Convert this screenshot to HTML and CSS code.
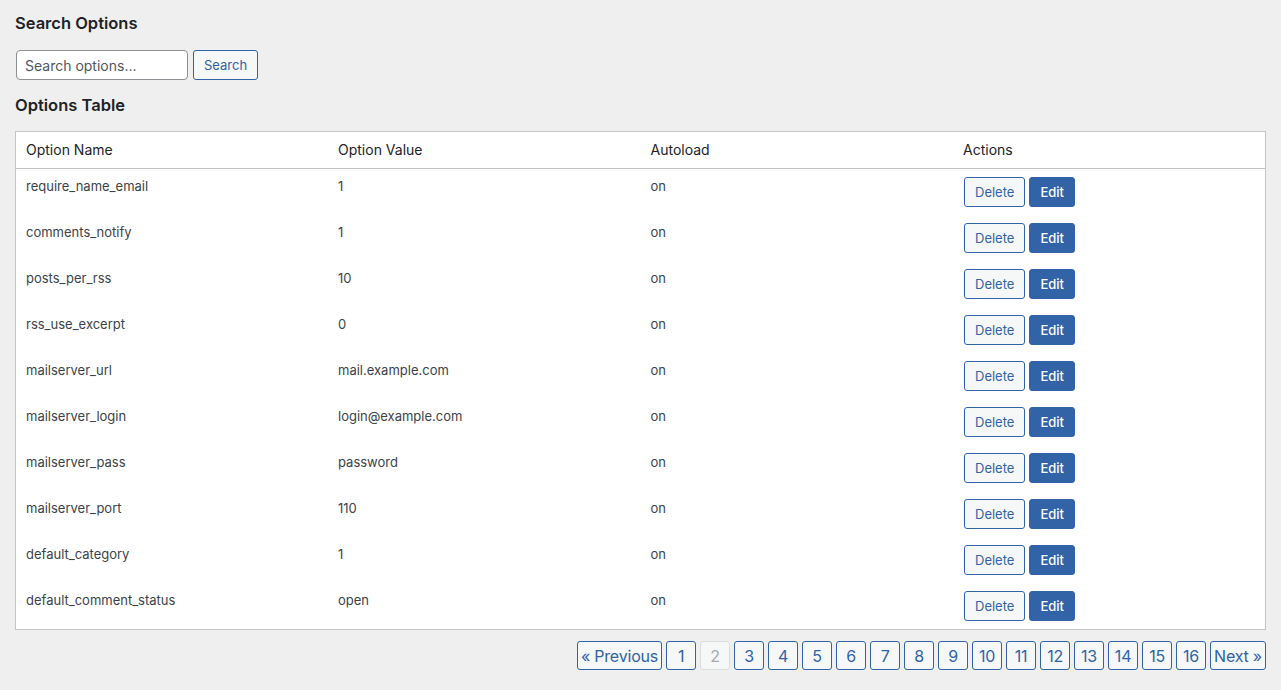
FILE: index.html
```html
<!DOCTYPE html>
<html>
<head>
<meta charset="utf-8">
<link rel="stylesheet" href="styles.css">
</head>
<body>
<div class="wrap">
  <h2 class="title">Search Options</h2>
  <form class="search">
    <input class="search-input" type="text" placeholder="Search options...">
    <button class="btn btn-secondary" type="button">Search</button>
  </form>
  <h2 class="title title-table">Options Table</h2>
  <table class="options">
    <thead>
      <tr><th>Option Name</th><th>Option Value</th><th>Autoload</th><th>Actions</th></tr>
    </thead>
    <tbody>
      <tr><td>require_name_email</td><td>1</td><td>on</td><td class="actions"><button class="btn btn-secondary">Delete</button><button class="btn btn-primary">Edit</button></td></tr>
      <tr><td>comments_notify</td><td>1</td><td>on</td><td class="actions"><button class="btn btn-secondary">Delete</button><button class="btn btn-primary">Edit</button></td></tr>
      <tr><td>posts_per_rss</td><td>10</td><td>on</td><td class="actions"><button class="btn btn-secondary">Delete</button><button class="btn btn-primary">Edit</button></td></tr>
      <tr><td>rss_use_excerpt</td><td>0</td><td>on</td><td class="actions"><button class="btn btn-secondary">Delete</button><button class="btn btn-primary">Edit</button></td></tr>
      <tr><td>mailserver_url</td><td>mail.example.com</td><td>on</td><td class="actions"><button class="btn btn-secondary">Delete</button><button class="btn btn-primary">Edit</button></td></tr>
      <tr><td>mailserver_login</td><td>login@example.com</td><td>on</td><td class="actions"><button class="btn btn-secondary">Delete</button><button class="btn btn-primary">Edit</button></td></tr>
      <tr><td>mailserver_pass</td><td>password</td><td>on</td><td class="actions"><button class="btn btn-secondary">Delete</button><button class="btn btn-primary">Edit</button></td></tr>
      <tr><td>mailserver_port</td><td>110</td><td>on</td><td class="actions"><button class="btn btn-secondary">Delete</button><button class="btn btn-primary">Edit</button></td></tr>
      <tr><td>default_category</td><td>1</td><td>on</td><td class="actions"><button class="btn btn-secondary">Delete</button><button class="btn btn-primary">Edit</button></td></tr>
      <tr><td>default_comment_status</td><td>open</td><td>on</td><td class="actions"><button class="btn btn-secondary">Delete</button><button class="btn btn-primary">Edit</button></td></tr>
    </tbody>
  </table>
  <nav class="pagination">
    <button class="page">« Previous</button>
    <button class="page">1</button>
    <button class="page current" disabled>2</button>
    <button class="page">3</button>
    <button class="page">4</button>
    <button class="page">5</button>
    <button class="page">6</button>
    <button class="page">7</button>
    <button class="page">8</button>
    <button class="page">9</button>
    <button class="page">10</button>
    <button class="page">11</button>
    <button class="page">12</button>
    <button class="page">13</button>
    <button class="page">14</button>
    <button class="page">15</button>
    <button class="page">16</button>
    <button class="page">Next »</button>
  </nav>
</div>
</body>
</html>
```

FILE: styles.css
```css
* { box-sizing: border-box; }
html, body {
  margin: 0;
  background: #efefef;
}
body {
  font-family: Inter, "Noto Sans", sans-serif;
  font-size: 13px;
  color: #1d2327;
}
.wrap {
  padding: 12px 15px 0 15px;
}
.title {
  font-size: 16.5px;
  font-weight: 600;
  margin: 0;
  line-height: 22px;
  color: #1d2327;
}
.search {
  display: flex;
  gap: 5px;
  margin: 16px 0 0 1px;
}
.search-input {
  width: 172px;
  height: 30px;
  border: 1px solid #8c8f94;
  border-radius: 4px;
  padding: 0 8px;
  font-family: inherit;
  font-size: 14px;
  color: #2c3338;
  background: #fff;
}
.search-input::placeholder { color: #50575e; }
.btn {
  height: 30px;
  border-radius: 3px;
  font-family: inherit;
  font-size: 13px;
  padding: 0 10px;
  cursor: pointer;
}
.btn-secondary {
  border: 1px solid #3163a6;
  background: #f6f7f7;
  color: #3163a6;
}
.btn-primary {
  border: 1px solid #3163a6;
  background: #3163a6;
  color: #fff;
  font-weight: 500;
}
.title-table {
  margin-top: 14px;
}
.options {
  margin-top: 15px;
  width: 100%;
  border: 1px solid #c3c4c7;
  border-collapse: collapse;
  background: #fff;
  table-layout: fixed;
}
.options th {
  text-align: left;
  font-weight: 400;
  font-size: 14px;
  padding: 8px 10px;
  line-height: 20px;
  border-bottom: 1px solid #c3c4c7;
  color: #1d2327;
}
.options td {
  vertical-align: top;
  padding: 8px 10px;
  line-height: 18px;
  height: 46px;
  color: #3c434a;
}
.options td.actions {
  display: flex;
  gap: 4px;
  padding-left: 11px;
}
.pagination {
  display: flex;
  justify-content: flex-end;
  gap: 4px;
  margin-top: 11px;
}
.page {
  height: 29px;
  min-width: 30px;
  padding: 0 3px;
  border: 1px solid #3163a6;
  border-radius: 3px;
  background: #f6f7f7;
  color: #3163a6;
  font-family: inherit;
  font-size: 16px;
  letter-spacing: -0.2px;
  cursor: pointer;
}
.page.current {
  border-color: #dcdcde;
  color: #a7aaad;
  background: #f6f7f7;
  cursor: default;
}
```
